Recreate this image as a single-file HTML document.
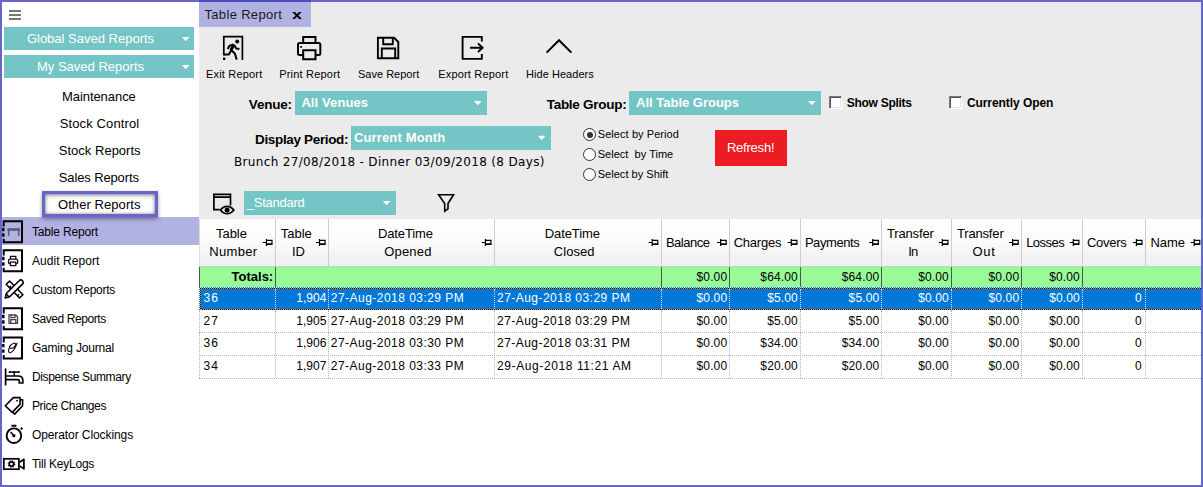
<!DOCTYPE html>
<html lang="en">
<head>
<meta charset="utf-8">
<title>Table Report</title>
<style>
html,body{margin:0;padding:0;}
html{background:#fff;}
body{width:1203px;height:487px;position:relative;overflow:hidden;background:#6666cc;font-family:"Liberation Sans",sans-serif;}
.a{position:absolute;}
.t{position:absolute;white-space:pre;height:20px;}
.teal{background:#74c5c6;}
.vsep{position:absolute;width:1px;top:219px;height:48px;background:#cdcdcd;}
.tsep{position:absolute;width:1px;top:267px;height:20px;background:#4a5a4a;}
.dsep{position:absolute;width:0;top:310px;height:68px;border-left:1px dotted #b4b4b4;}
.ssep{position:absolute;width:0;top:289px;height:20px;border-left:1px dotted #d8e6f8;}
.hline{position:absolute;left:199px;width:1002px;height:0;border-top:1px dotted #b4b4b4;}
.cb{position:absolute;width:13px;height:13px;box-sizing:border-box;background:#fff;border:1px solid;border-color:#7a7a7a #fff #fff #7a7a7a;box-shadow:inset 1px 1px 0 #555, inset -1px -1px 0 #e6e6e6;}
.rd{position:absolute;width:13px;height:13px;box-sizing:border-box;background:#fff;border:1px solid #333;border-radius:50%;}
</style>
</head>
<body>
<!-- panels -->
<div class="a" style="left:2px;top:2px;width:197px;height:483px;background:#fff;"></div>
<div class="a" style="left:199px;top:2px;width:1002px;height:217px;background:#ebebeb;"></div>
<div class="a" style="left:199px;top:219px;width:1002px;height:266px;background:#fff;"></div>
<!-- tab -->
<div class="a" style="left:199px;top:0;width:112px;height:2px;background:#4d4dbd;"></div>
<div class="a" style="left:199px;top:2px;width:112px;height:24.6px;background:#b1b1e2;"></div>
<!-- sidebar -->
<div class="a teal" style="left:4px;top:27px;width:190px;height:23px;"></div>
<div class="a teal" style="left:4px;top:55px;width:190px;height:23px;"></div>
<div class="a" style="left:2px;top:217px;width:197px;height:28px;background:#b1b1e2;"></div>
<div class="a" style="left:42px;top:191px;width:116px;height:26px;box-sizing:border-box;border:3px solid #6666cc;background:#fff;box-shadow:0 2px 4px rgba(0,0,0,.4), inset 0 1px 4px rgba(0,0,0,.45), inset 0 0 3px rgba(0,0,0,.25);"></div>
<!-- combos -->
<div class="a teal" style="left:295px;top:91px;width:192px;height:24px;"></div>
<div class="a teal" style="left:629px;top:91px;width:192px;height:24px;"></div>
<div class="a teal" style="left:351px;top:126px;width:200px;height:24px;"></div>
<div class="a teal" style="left:244px;top:191px;width:152px;height:24px;"></div>
<!-- checkboxes & radios -->
<div class="cb" style="left:829px;top:96px;"></div>
<div class="cb" style="left:949px;top:96px;"></div>
<div class="rd" style="left:583px;top:128px;"></div>
<div class="a" style="left:586.5px;top:131.5px;width:6px;height:6px;border-radius:50%;background:#333;"></div>
<div class="rd" style="left:583px;top:148px;"></div>
<div class="rd" style="left:583px;top:168px;"></div>
<!-- refresh -->
<div class="a" style="left:715px;top:130px;width:72px;height:36px;background:#ed1c24;"></div>
<!-- table header -->
<div class="a" style="left:199px;top:219px;width:1002px;height:48px;background:linear-gradient(#ffffff 0%,#fbfbfb 45%,#efefef 100%);"></div>
<div class="vsep" style="left:199px;background:#dcdcdc"></div><div class="vsep" style="left:275px"></div><div class="vsep" style="left:328px"></div><div class="vsep" style="left:494px"></div><div class="vsep" style="left:661px"></div><div class="vsep" style="left:729px"></div><div class="vsep" style="left:800px"></div><div class="vsep" style="left:881px"></div><div class="vsep" style="left:951px"></div><div class="vsep" style="left:1021px"></div><div class="vsep" style="left:1082px"></div><div class="vsep" style="left:1145px"></div>
<!-- totals row -->
<div class="a" style="left:199px;top:266px;width:1002px;height:1px;background:#b4dcb4;"></div>
<div class="a" style="left:199px;top:267px;width:1002px;height:20px;background:#98fb98;"></div>
<div class="tsep" style="left:199px"></div><div class="tsep" style="left:275px"></div><div class="tsep" style="left:661px"></div><div class="tsep" style="left:729px"></div><div class="tsep" style="left:800px"></div><div class="tsep" style="left:881px"></div><div class="tsep" style="left:951px"></div><div class="tsep" style="left:1021px"></div><div class="tsep" style="left:1082px"></div>
<!-- selected row -->
<div class="a" style="left:199px;top:287px;width:1002px;height:23px;background:#0078d7;"></div>
<div class="a" style="left:199px;top:287px;width:1002px;height:1px;background:repeating-linear-gradient(90deg,#1c7fd9 0 1px,#cfeedd 1px 2px);"></div>
<div class="a" style="left:199px;top:288px;width:1px;height:22px;background:repeating-linear-gradient(180deg,#d9ecfb 0 1px,#1c7fd9 1px 2px);"></div>
<div class="a" style="left:200px;top:288px;width:1001px;height:1px;background:repeating-linear-gradient(90deg,#111 0 1px,#e8862e 1px 2px);"></div>
<div class="a" style="left:200px;top:309px;width:1001px;height:1px;background:repeating-linear-gradient(90deg,#111 0 1px,#e8862e 1px 2px);"></div>
<div class="a" style="left:200px;top:288px;width:1px;height:22px;background:repeating-linear-gradient(180deg,#111 0 1px,#e8862e 1px 2px);"></div>
<div class="ssep" style="left:275px"></div><div class="ssep" style="left:328px"></div><div class="ssep" style="left:494px"></div><div class="ssep" style="left:661px"></div><div class="ssep" style="left:729px"></div><div class="ssep" style="left:800px"></div><div class="ssep" style="left:881px"></div><div class="ssep" style="left:951px"></div><div class="ssep" style="left:1021px"></div><div class="ssep" style="left:1082px"></div><div class="ssep" style="left:1145px"></div>
<div class="dsep" style="left:199px"></div><div class="dsep" style="left:275px"></div><div class="dsep" style="left:328px"></div><div class="dsep" style="left:494px"></div><div class="dsep" style="left:661px"></div><div class="dsep" style="left:729px"></div><div class="dsep" style="left:800px"></div><div class="dsep" style="left:881px"></div><div class="dsep" style="left:951px"></div><div class="dsep" style="left:1021px"></div><div class="dsep" style="left:1082px"></div><div class="dsep" style="left:1145px"></div>
<div class="hline" style="top:332px;"></div>
<div class="hline" style="top:355px;"></div>
<div class="hline" style="top:378px;"></div>
<!-- icons -->
<svg class="a" style="left:0;top:0;" width="1203" height="487" viewBox="0 0 1203 487" fill="none" stroke="#000" stroke-width="1.6">
<!-- hamburger -->
<g stroke="none" fill="#777"><rect x="9" y="10" width="12" height="2"/><rect x="9" y="14" width="12" height="2"/><rect x="9" y="18" width="12" height="2"/></g>
<!-- dropdown arrows -->
<g stroke="none" fill="#fff">
<path d="M182 37h7.600l-3.800 4.300z"/><path d="M182 65h7.600l-3.800 4.300z"/>
<path d="M474 101h7.600l-3.800 4.300z"/><path d="M808 101h7.600l-3.800 4.300z"/>
<path d="M537.800 135.800h7.600l-3.800 4.300z"/><path d="M382.800 201h7.600l-3.800 4.300z"/>
</g>
<!-- exit -->
<g stroke-width="1.700">
<path d="M223.800 55.600V36.600h18.600V60"/>
<path d="M223 57.600h2.300v2.400H223z" fill="#000" stroke="none"/>
<circle cx="237.200" cy="41.500" r="2" fill="#000" stroke="none"/>
<path d="M223.800 54.600h5l3-5.200 M233.800 44.400l-2.600 5.600 3.800 3.800 1.700 5.800 M233.400 44.400l-3.800 1.200-1.900 3.400 M234.200 45l2 3.600 3.200 .5" stroke-width="2" stroke-linejoin="round"/>
<path d="M232.400 44.600l2.200 .6-2.600 5.400-1.800-1z" fill="#000" stroke-width="1"/>
</g>
<!-- print -->
<g stroke-width="2">
<path d="M303.200 43V36.900h12.300V43"/>
<rect x="298" y="43" width="22.300" height="12" rx="1.500"/>
<path d="M303.200 50.200h12.300v9h-12.300z" fill="#ebebeb"/>
<rect x="300.200" y="46" width="1.800" height="1.800" fill="#000" stroke="none"/>
</g>
<!-- save -->
<g stroke-width="1.900">
<path d="M377.900 37.800h16.200l4.200 4.200v16.300h-20.400z"/>
<path d="M383.200 37.800v6.400h9.600v-6.400"/>
<path d="M381.800 58.300v-9.800h13.400v9.800"/>
</g>
<!-- export -->
<g stroke-width="1.900">
<path d="M481.800 41.400V36.900h-19.200v22h19.200v-4.800"/>
<path d="M470 47.700h12.400 M478 43.400l4.600 4.300-4.600 4.300"/>
</g>
<!-- chevron -->
<path d="M546.600 52.600L559 40.200l12.400 12.400" stroke-width="2"/>
<!-- layout -->
<g stroke-width="1.700">
<path d="M219.500 209.600h-5.600v-15.200h16.600v11.200 M213.900 197.200h16.600"/>
<path d="M220.400 210c2-2.600 4.200-3.700 6.700-3.700s4.700 1.100 6.700 3.700c-2 2.600-4.200 3.700-6.700 3.700s-4.700-1.100-6.700-3.700z" stroke-width="1.800"/>
<circle cx="227.100" cy="210" r="2.500" fill="#000" stroke="none"/>
</g>
<!-- filter -->
<path d="M438.600 194.700h15l-5.600 8.800v5.300l-3.300 2.300v-7.600z" stroke-width="1.600" stroke-linejoin="miter"/>
<!-- sidebar icons -->
<path d="M3.700 226.5V221.3H22V242.3H3.700V238.8" stroke-width="2"/><path d="M3.300 227.8v3.400 M3.300 233.3v3.400" stroke-width="2.400"/>
<path d="M7.400 229.500h12.600" stroke="#5a5a76" stroke-width="2.600"/><path d="M8.700 230v5.800 M18.700 230v5.800" stroke="#5a5a76" stroke-width="1.600"/>
<path d="M3.700 255.5V250.3H22V271.3H3.700V267.8" stroke-width="2"/><path d="M3.300 256.8v3.400 M3.300 262.3v3.400" stroke-width="2.400"/>
<g stroke="#111" stroke-width="1.300"><path d="M10.400 259.200v-2.800h5.400v2.800"/><rect x="8.500" y="259.200" width="9.200" height="4.600" rx="1.600"/><path d="M10.400 262.200h5.400v3.400h-5.400z" fill="#fff"/></g>
<g stroke-width="1.600" stroke-linejoin="round"><path d="M6.200 284.300l3.400-3.300 13.300 13.700-3.400 3.300z" fill="#fff"/><path d="M9.600 287.600l1.500-1.500 M17.600 295.800l1.500-1.500"/><path d="M17.800 282l1.300-1.200a2.400 2.400 0 0 1 3.400 3.400l-1.300 1.200-11.600 11.400-4.400 1.200 1.100-4.500z" fill="#fff"/><path d="M6 293.800l3.400 3.400"/></g>
<path d="M3.700 313.5V308.3H22V329.3H3.700V325.8" stroke-width="2"/><path d="M3.300 314.8v3.400 M3.300 320.3v3.400" stroke-width="2.400"/>
<g stroke="#444" stroke-width="1.300"><path d="M9 315h6.800l1.700 1.700v6.600H9z"/><path d="M11 315v2.600h4V315 M10.800 323.300v-3.600h5v3.600"/></g>
<path d="M3.700 342.6V337.4H22V358.4H3.700V354.9" stroke-width="2"/><path d="M3.300 343.9v3.400 M3.300 349.4v3.400" stroke-width="2.400"/>
<path d="M17.200 342.800c-1.400 4-3.400 8-6 9.600-2 1.200-3.200-.8-2.400-3.400.9-2.800 3-5.400 5.200-5.800 1.700-.3 2 1.500.8 3.200-1.300 1.800-3.700 2.600-4.900 1.500-1-.9-.1-2.700 1.400-3.200" stroke="#111" stroke-width="1.100"/>
<g stroke-width="1.700"><path d="M5.600 368.400v17"/><path d="M5.600 376h12.400c3.200 0 4.800 1.600 4.800 4.200v2.800h-3.500v-2c0-.9-.5-1.300-1.400-1.300H5.600"/><path d="M14.200 376v-3.800" stroke-width="1.400"/><path d="M9.600 372.100h9.200" stroke-width="1.500"/><circle cx="9.600" cy="372.100" r="1" fill="#000" stroke="none"/><circle cx="18.800" cy="372.100" r="1" fill="#000" stroke="none"/><circle cx="14.200" cy="372.100" r="1" fill="#000" stroke="none"/></g>
<g stroke-width="1.600" stroke-linejoin="round"><path d="M5.300 405.700l8-8.100h6.700v6.800l-7.800 8z" /><path d="M20 399.800h2.600v6l-7.900 8.300-2.500-2.200" /><circle cx="17" cy="400.700" r=".9" fill="#000" stroke="none"/></g>
<g stroke-width="1.900"><circle cx="13.900" cy="435.700" r="7.300"/><path d="M11.400 425.700h5 M20.800 427.800l1.600 1.600" stroke-width="2"/><path d="M13.900 435.700l-3.300-3.700" stroke-width="1.600"/><circle cx="13.900" cy="435.700" r="1.600" fill="#000" stroke="none"/></g>
<g stroke-width="1.700"><rect x="3.800" y="458.800" width="15.100" height="10.400"/><path d="M19.600 462.300l4.300-3v9.600l-4.300-3" stroke-linejoin="round"/><circle cx="11.500" cy="464" r="2.200" stroke-width="1.700"/><circle cx="11.500" cy="464" r="3.300" stroke-width="1.100" stroke-dasharray="1.300 1.290"/></g>
<!-- pins --><path d="M262.8 242.5h3.6 M266.4 239.1v6.8 M266.4 240.3h5.6v3.6h-5.6 M266.4 244.4h6.2" stroke-width="1.2"/><path d="M315.9 242.5h3.6 M319.5 239.1v6.8 M319.5 240.3h5.6v3.6h-5.6 M319.5 244.4h6.2" stroke-width="1.2"/><path d="M481.8 242.5h3.6 M485.4 239.1v6.8 M485.4 240.3h5.6v3.6h-5.6 M485.4 244.4h6.2" stroke-width="1.2"/><path d="M648.6 242.5h3.6 M652.2 239.1v6.8 M652.2 240.3h5.6v3.6h-5.6 M652.2 244.4h6.2" stroke-width="1.2"/><path d="M717.0 242.5h3.6 M720.6 239.1v6.8 M720.6 240.3h5.6v3.6h-5.6 M720.6 244.4h6.2" stroke-width="1.2"/><path d="M787.7 242.5h3.6 M791.3 239.1v6.8 M791.3 240.3h5.6v3.6h-5.6 M791.3 244.4h6.2" stroke-width="1.2"/><path d="M869.1 242.5h3.6 M872.7 239.1v6.8 M872.7 240.3h5.6v3.6h-5.6 M872.7 244.4h6.2" stroke-width="1.2"/><path d="M938.7 242.5h3.6 M942.3 239.1v6.8 M942.3 240.3h5.6v3.6h-5.6 M942.3 244.4h6.2" stroke-width="1.2"/><path d="M1009.0 242.5h3.6 M1012.6 239.1v6.8 M1012.6 240.3h5.6v3.6h-5.6 M1012.6 244.4h6.2" stroke-width="1.2"/><path d="M1069.7 242.5h3.6 M1073.3 239.1v6.8 M1073.3 240.3h5.6v3.6h-5.6 M1073.3 244.4h6.2" stroke-width="1.2"/><path d="M1132.8 242.5h3.6 M1136.4 239.1v6.8 M1136.4 240.3h5.6v3.6h-5.6 M1136.4 244.4h6.2" stroke-width="1.2"/><path d="M1190.6 242.5h3.6 M1194.2 239.1v6.8 M1194.2 240.3h5.6v3.6h-5.6 M1194.2 244.4h6.2" stroke-width="1.2"/>
</svg>
<span class="t" style="left:292.4px;top:5px;font:700 13px/20px 'Liberation Sans',sans-serif;color:#000;transform:scaleX(1.36);transform-origin:0 0;">x</span>
<span class="t" style="left:26.88px;top:29px;font:400 13px/20px 'Liberation Sans', sans-serif;color:#fff;letter-spacing:0.003px;">Global Saved Reports</span>
<span class="t" style="left:36.98px;top:57px;font:400 13px/20px 'Liberation Sans', sans-serif;color:#fff;letter-spacing:0.007px;">My Saved Reports</span>
<span class="t" style="left:61.98px;top:87px;font:400 13px/20px 'Liberation Sans', sans-serif;color:#000;letter-spacing:-0.061px;">Maintenance</span>
<span class="t" style="left:59.68px;top:114px;font:400 13px/20px 'Liberation Sans', sans-serif;color:#000;letter-spacing:0.124px;">Stock Control</span>
<span class="t" style="left:58.78px;top:141px;font:400 13px/20px 'Liberation Sans', sans-serif;color:#000;letter-spacing:0.015px;">Stock Reports</span>
<span class="t" style="left:58.78px;top:168px;font:400 13px/20px 'Liberation Sans', sans-serif;color:#000;letter-spacing:-0.126px;">Sales Reports</span>
<span class="t" style="left:57.98px;top:195px;font:400 13px/20px 'Liberation Sans', sans-serif;color:#000;letter-spacing:0.074px;">Other Reports</span>
<span class="t" style="left:31.92px;top:222px;font:400 12px/20px 'Liberation Sans', sans-serif;color:#000;letter-spacing:-0.162px;">Table Report</span>
<span class="t" style="left:31.92px;top:251px;font:400 12px/20px 'Liberation Sans', sans-serif;color:#000;letter-spacing:0.069px;">Audit Report</span>
<span class="t" style="left:31.92px;top:280px;font:400 12px/20px 'Liberation Sans', sans-serif;color:#000;letter-spacing:-0.249px;">Custom Reports</span>
<span class="t" style="left:31.92px;top:309px;font:400 12px/20px 'Liberation Sans', sans-serif;color:#000;letter-spacing:-0.419px;">Saved Reports</span>
<span class="t" style="left:31.92px;top:338px;font:400 12px/20px 'Liberation Sans', sans-serif;color:#000;letter-spacing:-0.189px;">Gaming Journal</span>
<span class="t" style="left:31.92px;top:367px;font:400 12px/20px 'Liberation Sans', sans-serif;color:#000;letter-spacing:-0.363px;">Dispense Summary</span>
<span class="t" style="left:31.92px;top:396px;font:400 12px/20px 'Liberation Sans', sans-serif;color:#000;letter-spacing:-0.347px;">Price Changes</span>
<span class="t" style="left:31.92px;top:425px;font:400 12px/20px 'Liberation Sans', sans-serif;color:#000;letter-spacing:-0.086px;">Operator Clockings</span>
<span class="t" style="left:31.92px;top:454px;font:400 12px/20px 'Liberation Sans', sans-serif;color:#000;letter-spacing:-0.224px;">Till KeyLogs</span>
<span class="t" style="left:204.48px;top:5px;font:400 13px/20px 'Liberation Sans', sans-serif;color:#1a1a1a;letter-spacing:0.329px;">Table Report</span>
<span class="t" style="left:206.06px;top:64px;font:400 11px/20px 'Liberation Sans', sans-serif;color:#000;letter-spacing:0.176px;">Exit Report</span>
<span class="t" style="left:279.16px;top:64px;font:400 11px/20px 'Liberation Sans', sans-serif;color:#000;letter-spacing:0.207px;">Print Report</span>
<span class="t" style="left:357.96px;top:64px;font:400 11px/20px 'Liberation Sans', sans-serif;color:#000;letter-spacing:0.012px;">Save Report</span>
<span class="t" style="left:438.26px;top:64px;font:400 11px/20px 'Liberation Sans', sans-serif;color:#000;letter-spacing:0.175px;">Export Report</span>
<span class="t" style="left:526.06px;top:64px;font:400 11px/20px 'Liberation Sans', sans-serif;color:#000;letter-spacing:0.047px;">Hide Headers</span>
<span class="t" style="left:248.86px;top:95px;font:700 13.5px/20px 'Liberation Sans', sans-serif;color:#000;letter-spacing:-0.217px;">Venue:</span>
<span class="t" style="left:301.38px;top:93px;font:700 13px/20px 'Liberation Sans', sans-serif;color:#fff;letter-spacing:0.099px;">All Venues</span>
<span class="t" style="left:546.66px;top:95px;font:700 13.5px/20px 'Liberation Sans', sans-serif;color:#000;letter-spacing:-0.265px;">Table Group:</span>
<span class="t" style="left:636.08px;top:93px;font:700 13px/20px 'Liberation Sans', sans-serif;color:#fff;letter-spacing:-0.008px;">All Table Groups</span>
<span class="t" style="left:846.72px;top:93px;font:700 12px/20px 'Liberation Sans', sans-serif;color:#000;letter-spacing:-0.276px;">Show Splits</span>
<span class="t" style="left:966.92px;top:93px;font:700 12px/20px 'Liberation Sans', sans-serif;color:#000;letter-spacing:-0.069px;">Currently Open</span>
<span class="t" style="left:255.06px;top:130px;font:700 13.5px/20px 'Liberation Sans', sans-serif;color:#000;letter-spacing:-0.343px;">Display Period:</span>
<span class="t" style="left:353.98px;top:128px;font:700 13px/20px 'Liberation Sans', sans-serif;color:#fff;letter-spacing:0.141px;">Current Month</span>
<span class="t" style="left:234.02px;top:152px;font:400 12px/20px 'DejaVu Sans', 'Liberation Sans', sans-serif;color:#000;letter-spacing:0.340px;">Brunch 27/08/2018 - Dinner 03/09/2018 (8 Days)</span>
<span class="t" style="left:597.76px;top:124px;font:400 11px/20px 'Liberation Sans', sans-serif;color:#000;letter-spacing:0.071px;">Select by Period</span>
<span class="t" style="left:597.76px;top:144px;font:400 11px/20px 'Liberation Sans', sans-serif;color:#000;letter-spacing:0.020px;">Select  by Time</span>
<span class="t" style="left:597.76px;top:164px;font:400 11px/20px 'Liberation Sans', sans-serif;color:#000;letter-spacing:0.025px;">Select by Shift</span>
<span class="t" style="left:726.88px;top:138px;font:400 13px/20px 'Liberation Sans', sans-serif;color:#fff;letter-spacing:-0.214px;">Refresh!</span>
<span class="t" style="left:246.78px;top:193px;font:400 13px/20px 'Liberation Sans', sans-serif;color:#fff;letter-spacing:-0.245px;">_Standard</span>
<span class="t" style="left:216.08px;top:224px;font:400 13px/20px 'Liberation Sans', sans-serif;color:#000;letter-spacing:-0.060px;">Table</span>
<span class="t" style="left:209.28px;top:242px;font:400 13px/20px 'Liberation Sans', sans-serif;color:#000;letter-spacing:0.318px;">Number</span>
<span class="t" style="left:280.68px;top:224px;font:400 13px/20px 'Liberation Sans', sans-serif;color:#000;letter-spacing:0.015px;">Table</span>
<span class="t" style="left:292.08px;top:242px;font:400 13px/20px 'Liberation Sans', sans-serif;color:#000;letter-spacing:-0.160px;">ID</span>
<span class="t" style="left:377.98px;top:224px;font:400 13px/20px 'Liberation Sans', sans-serif;color:#000;letter-spacing:-0.119px;">DateTime</span>
<span class="t" style="left:384.18px;top:242px;font:400 13px/20px 'Liberation Sans', sans-serif;color:#000;letter-spacing:0.195px;">Opened</span>
<span class="t" style="left:544.78px;top:224px;font:400 13px/20px 'Liberation Sans', sans-serif;color:#000;letter-spacing:-0.091px;">DateTime</span>
<span class="t" style="left:553.78px;top:242px;font:400 13px/20px 'Liberation Sans', sans-serif;color:#000;letter-spacing:0.054px;">Closed</span>
<span class="t" style="left:665.88px;top:233px;font:400 13px/20px 'Liberation Sans', sans-serif;color:#000;letter-spacing:-0.474px;">Balance</span>
<span class="t" style="left:733.68px;top:233px;font:400 13px/20px 'Liberation Sans', sans-serif;color:#000;letter-spacing:-0.217px;">Charges</span>
<span class="t" style="left:804.88px;top:233px;font:400 13px/20px 'Liberation Sans', sans-serif;color:#000;letter-spacing:-0.425px;">Payments</span>
<span class="t" style="left:886.98px;top:224px;font:400 13px/20px 'Liberation Sans', sans-serif;color:#000;letter-spacing:-0.155px;">Transfer</span>
<span class="t" style="left:908.18px;top:242px;font:400 13px/20px 'Liberation Sans', sans-serif;color:#000;letter-spacing:-0.804px;">In</span>
<span class="t" style="left:956.98px;top:224px;font:400 13px/20px 'Liberation Sans', sans-serif;color:#000;letter-spacing:-0.169px;">Transfer</span>
<span class="t" style="left:972.38px;top:242px;font:400 13px/20px 'Liberation Sans', sans-serif;color:#000;letter-spacing:0.786px;">Out</span>
<span class="t" style="left:1026.18px;top:233px;font:400 13px/20px 'Liberation Sans', sans-serif;color:#000;letter-spacing:-0.533px;">Losses</span>
<span class="t" style="left:1086.88px;top:233px;font:400 13px/20px 'Liberation Sans', sans-serif;color:#000;letter-spacing:-0.270px;">Covers</span>
<span class="t" style="left:1150.38px;top:233px;font:400 13px/20px 'Liberation Sans', sans-serif;color:#000;letter-spacing:0.017px;">Name</span>
<span class="t" style="left:231.48px;top:267px;font:700 13px/20px 'Liberation Sans', sans-serif;color:#000;letter-spacing:0.014px;">Totals:</span>
<span class="t" style="left:696.52px;top:267px;font:400 12px/20px 'Liberation Sans', sans-serif;color:#000;letter-spacing:0.132px;">$0.00</span>
<span class="t" style="left:760.32px;top:267px;font:400 12px/20px 'Liberation Sans', sans-serif;color:#000;letter-spacing:0.151px;">$64.00</span>
<span class="t" style="left:841.72px;top:267px;font:400 12px/20px 'Liberation Sans', sans-serif;color:#000;letter-spacing:0.151px;">$64.00</span>
<span class="t" style="left:918.22px;top:267px;font:400 12px/20px 'Liberation Sans', sans-serif;color:#000;letter-spacing:0.132px;">$0.00</span>
<span class="t" style="left:988.52px;top:267px;font:400 12px/20px 'Liberation Sans', sans-serif;color:#000;letter-spacing:0.132px;">$0.00</span>
<span class="t" style="left:1049.22px;top:267px;font:400 12px/20px 'Liberation Sans', sans-serif;color:#000;letter-spacing:0.132px;">$0.00</span>
<span class="t" style="left:203.52px;top:288px;font:400 12px/20px 'Liberation Sans', sans-serif;color:#fff;letter-spacing:1.101px;">36</span>
<span class="t" style="left:296.22px;top:288px;font:400 12px/20px 'Liberation Sans', sans-serif;color:#fff;letter-spacing:0.032px;">1,904</span>
<span class="t" style="left:330.82px;top:288px;font:400 12px/20px 'Liberation Sans', sans-serif;color:#fff;letter-spacing:0.467px;">27-Aug-2018 03:29 PM</span>
<span class="t" style="left:497.02px;top:288px;font:400 12px/20px 'Liberation Sans', sans-serif;color:#fff;letter-spacing:0.467px;">27-Aug-2018 03:29 PM</span>
<span class="t" style="left:696.52px;top:288px;font:400 12px/20px 'Liberation Sans', sans-serif;color:#fff;letter-spacing:0.132px;">$0.00</span>
<span class="t" style="left:767.22px;top:288px;font:400 12px/20px 'Liberation Sans', sans-serif;color:#fff;letter-spacing:0.132px;">$5.00</span>
<span class="t" style="left:848.62px;top:288px;font:400 12px/20px 'Liberation Sans', sans-serif;color:#fff;letter-spacing:0.132px;">$5.00</span>
<span class="t" style="left:918.22px;top:288px;font:400 12px/20px 'Liberation Sans', sans-serif;color:#fff;letter-spacing:0.132px;">$0.00</span>
<span class="t" style="left:988.52px;top:288px;font:400 12px/20px 'Liberation Sans', sans-serif;color:#fff;letter-spacing:0.132px;">$0.00</span>
<span class="t" style="left:1049.22px;top:288px;font:400 12px/20px 'Liberation Sans', sans-serif;color:#fff;letter-spacing:0.132px;">$0.00</span>
<span class="t" style="left:1134.92px;top:288px;font:400 12px/20px 'Liberation Sans', sans-serif;color:#fff;letter-spacing:0.000px;">0</span>
<span class="t" style="left:203.52px;top:311px;font:400 12px/20px 'Liberation Sans', sans-serif;color:#000;letter-spacing:1.101px;">27</span>
<span class="t" style="left:296.22px;top:311px;font:400 12px/20px 'Liberation Sans', sans-serif;color:#000;letter-spacing:0.032px;">1,905</span>
<span class="t" style="left:330.82px;top:311px;font:400 12px/20px 'Liberation Sans', sans-serif;color:#000;letter-spacing:0.467px;">27-Aug-2018 03:29 PM</span>
<span class="t" style="left:497.02px;top:311px;font:400 12px/20px 'Liberation Sans', sans-serif;color:#000;letter-spacing:0.467px;">27-Aug-2018 03:29 PM</span>
<span class="t" style="left:696.52px;top:311px;font:400 12px/20px 'Liberation Sans', sans-serif;color:#000;letter-spacing:0.132px;">$0.00</span>
<span class="t" style="left:767.22px;top:311px;font:400 12px/20px 'Liberation Sans', sans-serif;color:#000;letter-spacing:0.132px;">$5.00</span>
<span class="t" style="left:848.62px;top:311px;font:400 12px/20px 'Liberation Sans', sans-serif;color:#000;letter-spacing:0.132px;">$5.00</span>
<span class="t" style="left:918.22px;top:311px;font:400 12px/20px 'Liberation Sans', sans-serif;color:#000;letter-spacing:0.132px;">$0.00</span>
<span class="t" style="left:988.52px;top:311px;font:400 12px/20px 'Liberation Sans', sans-serif;color:#000;letter-spacing:0.132px;">$0.00</span>
<span class="t" style="left:1049.22px;top:311px;font:400 12px/20px 'Liberation Sans', sans-serif;color:#000;letter-spacing:0.132px;">$0.00</span>
<span class="t" style="left:1134.92px;top:311px;font:400 12px/20px 'Liberation Sans', sans-serif;color:#000;letter-spacing:0.000px;">0</span>
<span class="t" style="left:203.52px;top:333px;font:400 12px/20px 'Liberation Sans', sans-serif;color:#000;letter-spacing:1.101px;">36</span>
<span class="t" style="left:296.22px;top:333px;font:400 12px/20px 'Liberation Sans', sans-serif;color:#000;letter-spacing:0.032px;">1,906</span>
<span class="t" style="left:330.82px;top:333px;font:400 12px/20px 'Liberation Sans', sans-serif;color:#000;letter-spacing:0.467px;">27-Aug-2018 03:30 PM</span>
<span class="t" style="left:497.02px;top:333px;font:400 12px/20px 'Liberation Sans', sans-serif;color:#000;letter-spacing:0.467px;">27-Aug-2018 03:31 PM</span>
<span class="t" style="left:696.52px;top:333px;font:400 12px/20px 'Liberation Sans', sans-serif;color:#000;letter-spacing:0.132px;">$0.00</span>
<span class="t" style="left:760.32px;top:333px;font:400 12px/20px 'Liberation Sans', sans-serif;color:#000;letter-spacing:0.151px;">$34.00</span>
<span class="t" style="left:841.72px;top:333px;font:400 12px/20px 'Liberation Sans', sans-serif;color:#000;letter-spacing:0.151px;">$34.00</span>
<span class="t" style="left:918.22px;top:333px;font:400 12px/20px 'Liberation Sans', sans-serif;color:#000;letter-spacing:0.132px;">$0.00</span>
<span class="t" style="left:988.52px;top:333px;font:400 12px/20px 'Liberation Sans', sans-serif;color:#000;letter-spacing:0.132px;">$0.00</span>
<span class="t" style="left:1049.22px;top:333px;font:400 12px/20px 'Liberation Sans', sans-serif;color:#000;letter-spacing:0.132px;">$0.00</span>
<span class="t" style="left:1134.92px;top:333px;font:400 12px/20px 'Liberation Sans', sans-serif;color:#000;letter-spacing:0.000px;">0</span>
<span class="t" style="left:203.52px;top:356px;font:400 12px/20px 'Liberation Sans', sans-serif;color:#000;letter-spacing:1.101px;">34</span>
<span class="t" style="left:296.22px;top:356px;font:400 12px/20px 'Liberation Sans', sans-serif;color:#000;letter-spacing:0.032px;">1,907</span>
<span class="t" style="left:330.82px;top:356px;font:400 12px/20px 'Liberation Sans', sans-serif;color:#000;letter-spacing:0.467px;">27-Aug-2018 03:33 PM</span>
<span class="t" style="left:497.02px;top:356px;font:400 12px/20px 'Liberation Sans', sans-serif;color:#000;letter-spacing:0.602px;">29-Aug-2018 11:21 AM</span>
<span class="t" style="left:696.52px;top:356px;font:400 12px/20px 'Liberation Sans', sans-serif;color:#000;letter-spacing:0.132px;">$0.00</span>
<span class="t" style="left:760.32px;top:356px;font:400 12px/20px 'Liberation Sans', sans-serif;color:#000;letter-spacing:0.151px;">$20.00</span>
<span class="t" style="left:841.72px;top:356px;font:400 12px/20px 'Liberation Sans', sans-serif;color:#000;letter-spacing:0.151px;">$20.00</span>
<span class="t" style="left:918.22px;top:356px;font:400 12px/20px 'Liberation Sans', sans-serif;color:#000;letter-spacing:0.132px;">$0.00</span>
<span class="t" style="left:988.52px;top:356px;font:400 12px/20px 'Liberation Sans', sans-serif;color:#000;letter-spacing:0.132px;">$0.00</span>
<span class="t" style="left:1049.22px;top:356px;font:400 12px/20px 'Liberation Sans', sans-serif;color:#000;letter-spacing:0.132px;">$0.00</span>
<span class="t" style="left:1134.92px;top:356px;font:400 12px/20px 'Liberation Sans', sans-serif;color:#000;letter-spacing:0.000px;">0</span>
</body>
</html>
